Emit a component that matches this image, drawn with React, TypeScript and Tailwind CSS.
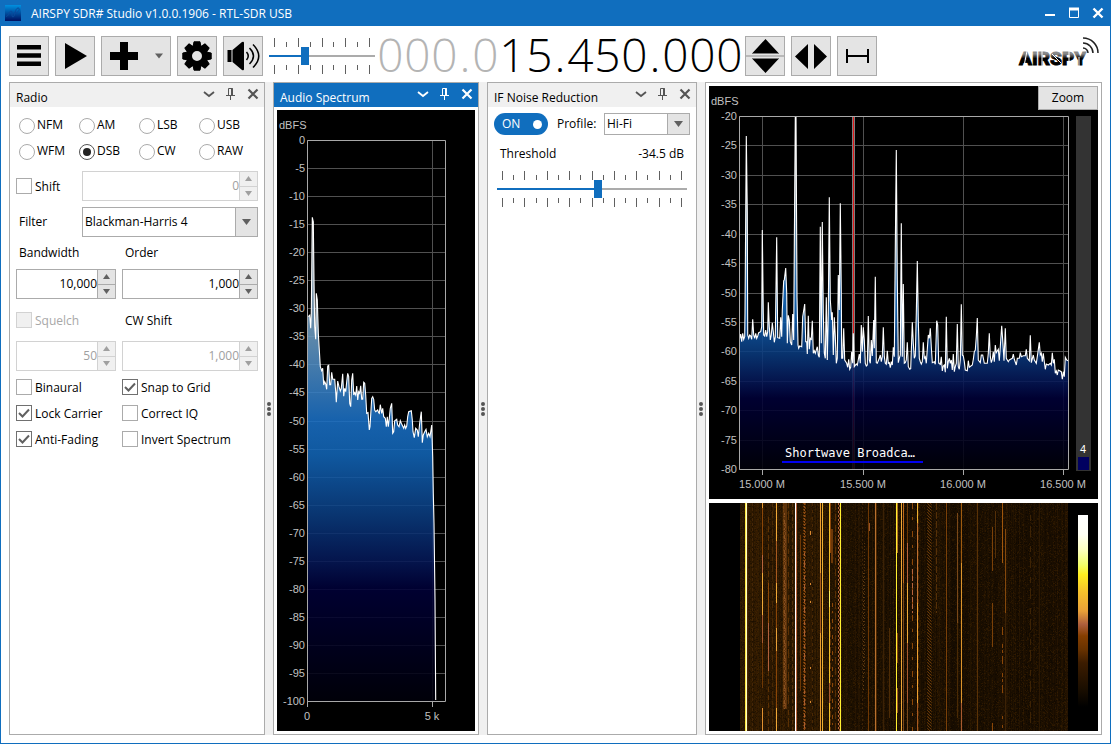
import { useId, useState } from 'react';
import type { CSSProperties, ReactNode } from 'react';

type Point = [number, number];

// trace samples in thirds of a pixel, relative to each chart's origin after the shift
const rfTrace =
  '119,775 122,762 125,785 128,760 131,778 134,770 135,700 139,168 142,400 143,765 146,775 149,765 152,768 155,778 158,718 161,765 164,775 167,760 170,775 173,768 176,758 182,755 185,740 187,450 190,700 191,765 194,768 197,750 200,770 203,755 205,667 208,740 211,780 214,765 217,728 220,755 223,787 226,770 230,472 233,773 239,775 242,712 245,770 247,690 251,602 253,600 257,564 260,640 262,790 265,706 268,720 271,785 275,795 278,702 281,780 283,500 286,110 288,110 291,650 294,795 296,805 299,798 305,800 308,710 314,672 317,785 320,785 322,822 325,707 328,808 331,775 334,778 337,722 340,820 343,812 346,820 352,800 355,825 358,832 361,440 364,790 367,426 370,700 373,820 376,835 379,652 382,840 385,700 388,352 391,660 395,720 397,697 400,825 403,712 406,770 409,850 412,835 415,585 418,690 421,370 424,640 425,835 428,835 431,745 434,840 440,850 443,862 446,838 449,868 452,862 455,815 458,850 460,760 463,860 469,852 472,856 478,822 481,850 484,735 487,815 490,742 493,780 496,850 499,858 502,855 505,708 508,840 511,850 514,780 517,828 521,720 523,805 526,590 529,848 532,850 538,835 541,825 544,845 547,830 550,742 553,830 556,850 559,853 562,812 565,850 568,848 571,863 574,845 577,855 580,802 583,830 586,500 589,210 592,600 595,848 598,835 601,825 604,430 607,830 610,612 613,850 616,848 619,840 622,787 625,860 629,868 632,866 635,780 637,727 640,790 643,835 646,828 649,700 652,543 655,720 658,835 661,845 664,852 667,845 670,787 673,835 676,830 679,850 682,808 685,765 688,775 691,745 694,800 697,848 703,845 706,853 710,722 713,735 716,850 719,850 721,855 724,830 727,873 730,858 733,855 736,877 739,710 742,865 745,845 748,835 751,850 754,840 757,870 760,822 763,875 766,860 769,850 772,732 775,860 778,868 781,840 784,673 787,825 790,828 793,845 796,870 802,872 805,842 808,862 817,855 820,838 823,815 826,810 829,770 832,714 835,840 841,848 844,825 848,825 853,850 862,850 865,820 868,760 871,830 874,848 877,838 880,815 883,845 886,795 889,818 895,808 898,842 901,800 905,737 908,780 912,842 916,745 919,835 925,845 928,840 937,835 940,822 943,838 949,855 952,835 958,835 961,818 964,830 970,827 976,827 979,808 982,835 988,842 991,766 994,848 1000,825 1003,840 1009,850 1012,830 1018,787 1021,825 1024,820 1027,845 1030,820 1033,845 1036,868 1039,852 1045,855 1051,850 1054,855 1057,818 1060,850 1063,838 1066,880 1069,873 1072,885 1075,870 1084,875 1087,898 1090,875 1093,890 1096,832 1100,840 1104,842';

const audioTrace =
  '115,710 119,706 122,745 124,700 126,500 127,412 130,425 132,600 134,740 137,778 139,640 142,660 145,760 148,810 151,860 155,872 158,865 161,915 164,905 167,912 170,928 173,858 176,856 179,914 182,914 185,877 188,898 194,898 197,935 199,967 203,903 207,920 211,933 214,925 218,881 221,949 224,925 227,935 230,905 233,880 236,890 239,970 242,980 245,900 248,880 251,945 254,938 257,945 260,918 263,960 266,935 269,940 272,917 275,958 278,958 281,907 284,910 287,945 290,1000 294,998 298,1050 300,1040 305,955 308,950 311,958 314,990 317,995 323,990 326,998 328,1000 331,974 335,1000 338,985 341,1010 346,1015 349,1040 352,1010 355,1040 358,1015 361,985 365,970 368,1060 371,1055 374,1022 380,1018 383,1035 387,1040 391,1022 394,1030 401,1045 404,1035 407,1045 410,1038 413,1010 416,995 424,992 427,1020 429,1055 433,1073 437,1045 442,1050 445,1070 449,1030 454,995 457,1088 460,1065 464,1055 468,1048 472,1070 476,1060 480,1070 485,1035 488,1130 490,1240 492,1330 495,1560 497,1860';

function readTrace(source: string, shiftX: number, shiftY: number): Point[] {
  return source.split(' ').map((pair) => {
    const [x, y] = pair.split(',').map(Number);
    return [(x - shiftX) / 3, (y - shiftY) / 3];
  });
}

function toPath(points: Point[]) {
  return points.map(([x, y], i) => `${i ? 'L' : 'M'}${x.toFixed(1)} ${y.toFixed(1)}`).join('');
}

const rfPath = toPath(readTrace(rfTrace, 27, 18));
const audioPath = toPath(readTrace(audioTrace, 21, 90));

const axisText = 'fill-[#c0c0c0] font-["Liberation_Sans",sans-serif] text-[11px]';

function FillGradient({ id, top, bottom }: { id: string; top: number; bottom: number }) {
  return (
    <linearGradient id={id} gradientUnits="userSpaceOnUse" x1="0" x2="0" y1={top} y2={bottom}>
      <stop offset="0" stopColor="#f0f2f5" />
      <stop offset=".2" stopColor="#a9b6c0" />
      <stop offset=".35" stopColor="#6b9cc4" />
      <stop offset=".5" stopColor="#1a70c6" />
      <stop offset=".56" stopColor="#1266b8" />
      <stop offset=".67" stopColor="#0a3c80" />
      <stop offset=".75" stopColor="#051858" />
      <stop offset=".8" stopColor="#000038" />
      <stop offset="1" stopColor="#00000a" />
    </linearGradient>
  );
}

function AudioChart() {
  const id = useId();
  const levels = Array.from({ length: 21 }, (_, i) => i);
  return (
    <svg viewBox="0 0 198 621" className="block h-full w-full" role="img" aria-label="Audio Spectrum">
      <defs><FillGradient id={id} top={30} bottom={591} /></defs>
      <text x="2" y="19" className={axisText}>dBFS</text>
      {levels.map((i) => {
        const y = Math.round(30 + i * 28.05);
        return (
          <g key={i}>
            <path d={`M30 ${y + 0.5}H168`} stroke="#505050" />
            <text x="28" y={y + 4} textAnchor="end" className={axisText}>{i === 0 ? '0' : -5 * i}</text>
          </g>
        );
      })}
      <path d="M155.5 30V591" stroke="#505050" />
      <path d={`${audioPath}V591H31V207Z`} fill={`url(#${id})`} fillOpacity=".87" />
      <path d={audioPath} fill="none" stroke="#fff" strokeWidth="1.1" />
      <path d="M30.5 30.5H168.5V591.5H30.5ZM30.5 591v6M155.5 591v6" fill="none" stroke="#a8a8a8" />
      <text x="30" y="610" textAnchor="middle" className={axisText}>0</text>
      <text x="155" y="610" textAnchor="middle" className={axisText}>5 k</text>
    </svg>
  );
}

const rfTicks: [number, string][] = [
  [53, '15.000 M'],
  [154, '15.500 M'],
  [254, '16.000 M'],
  [354, '16.500 M'],
];

function RfChart() {
  const id = useId();
  const levels = Array.from({ length: 13 }, (_, i) => i);
  return (
    <svg viewBox="0 0 389 413" className="block h-full w-full" role="img" aria-label="RF Spectrum">
      <defs><FillGradient id={id} top={30} bottom={383} /></defs>
      <text x="2" y="19" className={axisText}>dBFS</text>
      {levels.map((i) => {
        const y = Math.round(30 + i * 29.42);
        return (
          <g key={i}>
            <path d={`M30 ${y + 0.5}H359`} stroke="#505050" />
            <text x="28" y={y + 4} textAnchor="end" className={axisText}>{-20 - 5 * i}</text>
          </g>
        );
      })}
      {rfTicks.map(([x, label]) => (
        <g key={label}>
          <path d={`M${x + 0.5} 30V383`} stroke="#505050" />
          <text x={x} y="402" textAnchor="middle" className={axisText}>{label}</text>
        </g>
      ))}
      <path d="M144.5 30V383" stroke="#7d7d7d" strokeWidth="3" />
      <path d="M144.5 30V383" stroke="#e01818" />
      <path d={`${rfPath}V383H31Z`} fill={`url(#${id})`} fillOpacity=".87" />
      <path d={rfPath} fill="none" stroke="#fff" strokeWidth="1.1" />
      <path d="M30.5 30.5H359.5V383.5H30.5Z" fill="none" stroke="#a8a8a8" />
      <path d="M53.5 383v6M154.5 383v6M254.5 383v6M354.5 383v6" stroke="#a8a8a8" />
      <text x="76" y="371" className="fill-white font-['DejaVu_Sans_Mono',monospace] text-[12px]">Shortwave Broadca…</text>
      <path d="M73 376H214" stroke="#0000f0" strokeWidth="2" />
      <rect x="367" y="30" width="15" height="355" fill="#333" />
      <rect x="369" y="371" width="11" height="13" fill="#000060" />
      <text x="374" y="367" textAnchor="middle" className="fill-white font-['Liberation_Sans',sans-serif] text-[11px]">4</text>
    </svg>
  );
}

type Streak = [x: number, width: number, from: number, to: number, color: string, dash?: string];

const streaks: Streak[] = [
  [36, 1, 0, 228, '#ffe640'], [37, 1, 0, 228, '#ffffc0'], [38, 1, 0, 228, '#4a2600'],
  [43, 1, 0, 228, '#452606', '3 2'],
  [53, 1, 0, 5, '#e89a30'], [53, 1, 5, 52, '#8a4608'], [53, 1, 52, 70, '#b8643c'], [53, 1, 70, 112, '#efa838'], [53, 1, 112, 140, '#a85a30'], [53, 1, 140, 185, '#6e3804'], [53, 1, 205, 228, '#e09030'],
  [59, 1, 14, 80, '#5a3004', '6 3'], [59, 1, 80, 120, '#8a4608'], [59, 1, 120, 168, '#b0603c'], [59, 1, 168, 228, '#5a3004', '5 3'],
  [63, 1, 0, 228, '#4a2804', '4 4 7 3'],
  [67, 1, 0, 38, '#efa838'], [67, 1, 38, 80, '#a85a20'], [67, 1, 80, 100, '#efa838'], [67, 1, 100, 125, '#8a4608'], [67, 1, 125, 148, '#e8a038'], [67, 1, 148, 205, '#8a4608'], [67, 1, 205, 228, '#efa838'],
  [74, 4, 0, 206, '#5c320a'], [74, 1, 0, 206, '#70400f', '1 2 3 1 2 4'], [75, 1, 10, 206, '#8a5020', '2 1 1 3 4 1 1 2'], [76, 1, 20, 206, '#7c4518', '5 2 1 1 3 3'],
  [79, 1, 0, 228, '#5a3004', '5 3 9 6'], [83, 1, 0, 228, '#55300a', '4 3'],
  [86, 1, 0, 228, '#ffffff'], [87, 1, 0, 228, '#b8643c'],
  [91, 1, 32, 188, '#6e3804'],
  [94, 1, 0, 228, '#7a4008', '1 2'], [95, 1, 0, 228, '#8f4a14', '2 1'], [95, 1, 50, 228, '#aa5c30', '3 5 6 9'], [96, 1, 0, 228, '#6a3806', '2 2'],
  [101, 1, 28, 32, '#d88830'], [101, 1, 80, 82, '#d88830'], [101, 1, 98, 100, '#d88830'], [101, 1, 164, 166, '#d88830'], [101, 1, 198, 200, '#d88830'], [103, 1, 0, 228, '#4a2804', '3 4'],
  [111, 1, 0, 228, '#eb9c30'], [113, 1, 0, 228, '#efb030'], [111, 1, 70, 130, '#aa5c20'],
  [120, 1, 0, 228, '#f3c028'], [120, 1, 88, 104, '#fff060'], [120, 1, 180, 200, '#a85a30'],
  [121, 1, 0, 50, '#8a4608'], [122, 2, 26, 60, '#6e3808'], [121, 1, 120, 228, '#5a3004', '6 2'], [123, 1, 100, 228, '#8a4608', '4 4 2 6'],
  [126, 1, 0, 228, '#5a3004', '7 4'],
  [129, 1, 0, 228, '#b8643c', '2 2'], [130, 1, 2, 228, '#9a5428', '2 2'], [131, 1, 0, 228, '#fff030'],
  [153, 1, 0, 228, '#3c2206', '2 2'], [154, 1, 70, 190, '#6a4214', '1 3'], [155, 1, 40, 170, '#55320c', '1 2'],
  [159, 1, 0, 228, '#6e3804'], [160, 1, 20, 28, '#9a5428'], [166, 1, 0, 228, '#b87030'], [167, 1, 0, 228, '#4a2600'],
  [174, 1, 0, 228, '#3c2206'], [180, 1, 125, 215, '#4e2c06'],
  [187, 1, 0, 228, '#fff030'], [188, 1, 0, 50, '#b87820'], [188, 1, 130, 160, '#8a4608'], [188, 1, 185, 210, '#a05820'],
  [192, 1, 0, 228, '#efa838'], [194, 1, 0, 228, '#7a481c'], [194, 1, 0, 80, '#c06c1c'],
  [198, 1, 0, 40, '#6e3804'], [198, 1, 40, 80, '#b8643c'], [198, 1, 80, 140, '#efa838'], [198, 1, 140, 200, '#a85a30'], [198, 1, 200, 228, '#7a481c'],
  [203, 1, 0, 228, '#8a4608', '6 8 3 11'], [203, 1, 66, 110, '#b8643c', '5 2'],
  [208, 1, 0, 20, '#efb030'], [208, 1, 20, 100, '#c07030'], [208, 1, 100, 200, '#efa030'], [208, 1, 200, 228, '#a85a20'], [209, 1, 0, 228, '#4a2600', '5 3'],
  [218, 1, 0, 228, '#5a3004', '1 2'], [219, 1, 1, 228, '#6a3a08', '1 2'], [220, 1, 2, 228, '#5f3408', '1 2'], [221, 1, 0, 228, '#6a3a08', '1 2'], [222, 1, 1, 228, '#4a2a04', '1 2'],
  [227, 1, 0, 110, '#553008', '7 2'], [237, 1, 0, 228, '#7a4008'], [248, 1, 10, 120, '#7a4818'], [248, 1, 120, 215, '#4a2a04'],
  [252, 1, 0, 60, '#a05c10'], [252, 1, 60, 200, '#dc942c'], [252, 1, 200, 228, '#a85a30'],
  [268, 1, 0, 228, '#5a3206'], [283, 1, 24, 68, '#7a4008'], [283, 1, 100, 144, '#7a4008'], [283, 1, 220, 228, '#8a4608'],
  [286, 1, 8, 55, '#553008'], [293, 1, 0, 60, '#a0560c'], [293, 1, 124, 195, '#8a4608', '8 9 4 2 3 3'], [293, 1, 213, 228, '#8a4608', '3 6'],
  [296, 1, 26, 110, '#85480c'], [296, 1, 110, 228, '#3c2206'], [321, 1, 12, 228, '#3e2304', '6 5 11 9'], [330, 1, 0, 228, '#2c1802'],
];

function seeded(seed: number) {
  let value = seed;
  return () => {
    value = (value * 1664525 + 1013904223) % 4294967296;
    return value / 4294967296;
  };
}

function speckle(count: number, seed: number) {
  const next = seeded(seed);
  let path = '';
  for (let i = 0; i < count; i++) {
    path += `M${31 + Math.floor(next() * 328)} ${Math.floor(next() * 228)}h1v1h-1z`;
  }
  return path;
}

const darkSpeckle = speckle(14000, 7);
const lightSpeckle = speckle(11000, 41);
const columnNoise = (() => {
  const next = seeded(99);
  return Array.from({ length: 328 }, () => next());
})();

function Waterfall() {
  const id = useId();
  return (
    <svg viewBox="0 0 389 228" className="block h-full w-full" shapeRendering="crispEdges" role="img" aria-label="Waterfall">
      <defs>
        <linearGradient id={`${id}base`}>
          <stop offset="0" stopColor="#2e1900" />
          <stop offset=".25" stopColor="#2a1700" />
          <stop offset=".36" stopColor="#1d1000" />
          <stop offset="1" stopColor="#1c0f00" />
        </linearGradient>
        <linearGradient id={`${id}scale`} x2="0" y2="1">
          <stop offset="0" stopColor="#fff" />
          <stop offset=".1" stopColor="#fffff4" />
          <stop offset=".18" stopColor="#fdffc0" />
          <stop offset=".26" stopColor="#f2ff68" />
          <stop offset=".31" stopColor="#ffef20" />
          <stop offset=".4" stopColor="#f6c22c" />
          <stop offset=".5" stopColor="#e8a038" />
          <stop offset=".57" stopColor="#ae5e3c" />
          <stop offset=".63" stopColor="#843e00" />
          <stop offset=".7" stopColor="#683200" />
          <stop offset=".77" stopColor="#3c1c00" />
          <stop offset=".9" stopColor="#1c0f00" />
          <stop offset="1" stopColor="#000" />
        </linearGradient>
      </defs>
      <rect x="31" width="328" height="228" fill={`url(#${id}base)`} />
      {columnNoise.map((level, i) => (
        <rect key={i} x={31 + i} width="1" height="228" fill={level > 0.5 ? '#5a3204' : '#000'} fillOpacity={Math.abs(level - 0.5) * 0.35} />
      ))}
      <path d={darkSpeckle} fill="#000" fillOpacity=".28" />
      <path d={lightSpeckle} fill="#6a3a00" fillOpacity=".22" />
      {streaks.map(([x, width, from, to, color, dash], i) => (
        <path key={i} d={`M${x + width / 2} ${from}V${to}`} stroke={color} strokeWidth={width} strokeDasharray={dash} />
      ))}
      <rect x="369" y="12" width="10" height="192" fill={`url(#${id}scale)`} />
    </svg>
  );
}

function ToolButton({ label, wide = false, children }: { label: string; wide?: boolean; children: ReactNode }) {
  return (
    <button
      type="button"
      aria-label={label}
      className={`h-10 shrink-0 border border-[#ababab] bg-[#e4e4e4] hover:bg-[#d4d4d4] ${wide ? 'w-[70px]' : 'w-10'}`}
    >
      <svg viewBox={wide ? '1 1 68 38' : '1 1 38 38'} className="block h-full w-full">{children}</svg>
    </button>
  );
}

function Ticks({ count, below = false }: { count: number; below?: boolean }) {
  return (
    <div className={`flex h-[10px] justify-between px-[5px] ${below ? 'items-start' : 'items-end'}`}>
      {Array.from({ length: count }, (_, i) => (
        <span key={i} className={`w-px bg-[#606060] ${i % 2 ? 'h-[5px]' : 'h-[9px]'}`} />
      ))}
    </div>
  );
}

function Slider({ label, initial, ticks }: { label: string; initial: number; ticks: number }) {
  const [value, setValue] = useState(initial);
  return (
    <div>
      <Ticks count={ticks} />
      <input
        type="range"
        aria-label={label}
        min={0}
        max={1000}
        value={value}
        onChange={(event) => setValue(Number(event.target.value))}
        style={{ '--fill': `${value / 10}%` } as CSSProperties}
        className="block h-[18px] w-full appearance-none bg-transparent [&::-webkit-slider-runnable-track]:h-[2px] [&::-webkit-slider-runnable-track]:bg-[linear-gradient(to_right,#106ebe_var(--fill),#ababab_var(--fill))] [&::-webkit-slider-thumb]:mt-[-8px] [&::-webkit-slider-thumb]:h-[18px] [&::-webkit-slider-thumb]:w-2 [&::-webkit-slider-thumb]:appearance-none [&::-webkit-slider-thumb]:bg-[#106ebe]"
      />
      <Ticks count={ticks} below />
    </div>
  );
}

function PanelHeader({ title, active = false }: { title: string; active?: boolean }) {
  return (
    <header className={`flex h-6 shrink-0 items-start justify-between pr-[5px] pl-1.5 ${active ? 'bg-[#106ebe] text-white' : 'bg-[#f0f0f0] text-black'}`}>
      <h2 className="pt-[7px] leading-4">{title}</h2>
      <div className={`flex gap-2.5 pt-[5px] ${active ? 'text-white' : 'text-[#555]'}`}>
        <button type="button" aria-label="Panel menu">
          <svg viewBox="0 0 12 14" className="block h-[14px] w-3" fill="none" stroke="currentColor" strokeWidth="1.8"><path d="M1 4l5 4 5-4" /></svg>
        </button>
        <button type="button" aria-label="Auto hide">
          <svg viewBox="0 0 12 14" className="block h-[14px] w-3" fill="none" stroke="currentColor"><path d="M3.5 7V.5h4V7M7.5 .5V7M6.500 .5V7M1 7.500h9M5.500 8v4" /></svg>
        </button>
        <button type="button" aria-label="Close panel">
          <svg viewBox="0 0 12 14" className="block h-[14px] w-3" fill="none" stroke="currentColor" strokeWidth="2.2"><path d="M1.500 1.500l9 9M10.500 1.500l-9 9" /></svg>
        </button>
      </div>
    </header>
  );
}

function Splitter() {
  return (
    <div className="flex w-2 shrink-0 flex-col items-center justify-center gap-px bg-[#f0f0f0]" role="separator">
      <span className="size-1 rounded-full bg-[#555]" />
      <span className="size-1 rounded-full bg-[#555]" />
      <span className="size-1 rounded-full bg-[#555]" />
    </div>
  );
}

function Spinner({ label, value, disabled = false }: { label: string; value: string; disabled?: boolean }) {
  const line = disabled ? 'border-[#d2d2d2]' : 'border-[#ababab]';
  const arrow = disabled ? 'fill-[#a0a0a0]' : 'fill-[#606060]';
  const face = disabled ? 'bg-[#f0f0f0]' : 'bg-[#e4e4e4]';
  return (
    <div className={`flex h-[30px] min-w-0 flex-1 border bg-white ${line}`}>
      <input
        aria-label={label}
        defaultValue={value}
        disabled={disabled}
        className="w-0 min-w-0 flex-1 bg-transparent text-right text-black outline-none disabled:text-[#a0a0a0]"
      />
      <div className={`flex w-[18px] flex-col border-l ${line}`}>
        <button type="button" aria-label={`Increase ${label}`} disabled={disabled} className={`flex flex-1 items-center justify-center border-b ${face} ${line}`}>
          <svg viewBox="0 0 7 5" className={`h-[5px] w-[7px] ${arrow}`}><path d="M3.5 0L7 5H0z" /></svg>
        </button>
        <button type="button" aria-label={`Decrease ${label}`} disabled={disabled} className={`flex flex-1 items-center justify-center ${face}`}>
          <svg viewBox="0 0 7 5" className={`h-[5px] w-[7px] ${arrow}`}><path d="M3.5 5L0 0h7z" /></svg>
        </button>
      </div>
    </div>
  );
}

function DropDown({ id, options, small = false }: { id: string; options: string[]; small?: boolean }) {
  return (
    <div className={`relative min-w-0 flex-1 ${small ? 'h-[22px]' : 'h-[30px]'}`}>
      <select id={id} className="h-full w-full appearance-none border border-[#ababab] bg-white pr-6 pl-0.5 text-black outline-none">
        {options.map((option) => <option key={option}>{option}</option>)}
      </select>
      <span className="pointer-events-none absolute inset-y-0 right-0 flex w-[23px] items-center justify-center border border-[#ababab] bg-[#e4e4e4]">
        <svg viewBox="0 0 9 6" className="h-1.5 w-[9px] fill-[#606060]"><path d="M0 0h9L4.5 6z" /></svg>
      </span>
    </div>
  );
}

function CheckBox({ label, checked = false, disabled = false }: { label: string; checked?: boolean; disabled?: boolean }) {
  return (
    <label className={`flex h-[26px] items-center gap-[3px] whitespace-nowrap ${disabled ? 'text-[#a8a8a8]' : ''}`}>
      <span className="grid">
        <input
          type="checkbox"
          defaultChecked={checked}
          disabled={disabled}
          className="peer col-start-1 row-start-1 size-4 appearance-none border border-[#ababab] bg-white checked:border-[#707070] disabled:border-[#d2d2d2] disabled:bg-[#f0f0f0]"
        />
        <svg viewBox="0 0 16 16" className="pointer-events-none invisible col-start-1 row-start-1 size-4 peer-checked:visible" fill="none" stroke="#606060" strokeWidth="2">
          <path d="M3 8l3.5 3.5L13 4.5" />
        </svg>
      </span>
      <span className="pt-0.5">{label}</span>
    </label>
  );
}

const modes = ['NFM', 'AM', 'LSB', 'USB', 'WFM', 'DSB', 'CW', 'RAW'];

function RadioPanel() {
  const [mode, setMode] = useState('DSB');
  return (
    <section className="flex w-64 shrink-0 flex-col border border-[#ababab] bg-white">
      <PanelHeader title="Radio" />
      <div className="px-1.5 pt-1.5">
        <div className="grid grid-cols-[repeat(4,60px)] pl-[3px]" role="radiogroup" aria-label="Mode">
          {modes.map((name) => (
            <label key={name} className="flex h-[26px] items-center gap-0.5">
              <span className="grid place-items-center">
                <input
                  type="radio"
                  name="mode"
                  checked={mode === name}
                  onChange={() => setMode(name)}
                  className="peer col-start-1 row-start-1 size-4 appearance-none rounded-full border border-[#ababab] bg-white checked:border-[#555]"
                />
                <span className="pointer-events-none invisible col-start-1 row-start-1 size-2 rounded-full bg-[#222] peer-checked:visible" />
              </span>
              <span className="pb-0.5">{name}</span>
            </label>
          ))}
        </div>
        <div className="mt-1.5 flex items-center">
          <div className="w-[66px]"><CheckBox label="Shift" /></div>
          <Spinner label="Shift value" value="0" disabled />
        </div>
        <div className="mt-1.5 flex items-center">
          <label htmlFor="filter" className="w-[66px] pl-[3px]">Filter</label>
          <DropDown id="filter" options={['Blackman-Harris 4', 'Blackman-Harris 7', 'Hamming']} />
        </div>
        <div className="grid grid-cols-[100px_1fr] items-center gap-x-1.5">
          <span className="flex h-8 items-center pl-[3px]">Bandwidth</span>
          <span className="flex h-8 items-center pl-[3px]">Order</span>
          <Spinner label="Bandwidth" value="10,000" />
          <Spinner label="Order" value="1,000" />
          <div className="flex h-[42px] items-center"><CheckBox label="Squelch" disabled /></div>
          <span className="flex h-[42px] items-center pt-0.5 pl-[3px]">CW Shift</span>
          <Spinner label="Squelch level" value="50" disabled />
          <Spinner label="CW Shift" value="1,000" disabled />
        </div>
        <div className="mt-[3px] grid grid-cols-[100px_1fr] gap-x-1.5">
          <CheckBox label="Binaural" />
          <CheckBox label="Snap to Grid" checked />
          <CheckBox label="Lock Carrier" checked />
          <CheckBox label="Correct IQ" />
          <CheckBox label="Anti-Fading" checked />
          <CheckBox label="Invert Spectrum" />
        </div>
      </div>
    </section>
  );
}

function NoisePanel() {
  const [on, setOn] = useState(true);
  return (
    <section className="flex w-[210px] shrink-0 flex-col border border-[#ababab] bg-white">
      <PanelHeader title="IF Noise Reduction" />
      <div className="px-1.5 pt-1.5">
        <div className="flex items-center">
          <button
            type="button"
            role="switch"
            aria-checked={on}
            onClick={() => setOn(!on)}
            className={`flex h-[22px] w-[54px] items-center justify-between rounded-full pr-1.5 pl-2 text-white ${on ? 'bg-[#106ebe]' : 'flex-row-reverse bg-[#ababab]'}`}
          >
            {on ? 'ON' : 'OFF'}
            <span className="size-[9px] rounded-full bg-white" />
          </button>
          <label htmlFor="profile" className="w-14 pl-[9px]">Profile:</label>
          <DropDown id="profile" options={['Hi-Fi', 'Narrow', 'DX']} small />
        </div>
        <div className="mt-[11px] flex items-center justify-between px-1.5 leading-4">
          <span>Threshold</span>
          <span>-34.5 dB</span>
        </div>
        <div className="mt-2 px-[3px]"><Slider label="Threshold" initial={533} ticks={17} /></div>
      </div>
    </section>
  );
}

function Triangles({ d }: { d: string }) {
  return <path d={d} fill="#000" />;
}

function FrequencyDisplay() {
  const digits = '000.015.450.000'.split('');
  return (
    <div className="ml-0.5 flex h-10 shrink-0 items-center pb-1 font-['Open_Sans',sans-serif] text-[46px] leading-9 font-[350]" aria-label="Frequency">
      {digits.map((digit, i) => (
        <span key={i} className={`text-center ${digit === '.' ? 'w-[14px]' : 'w-[27px]'} ${i < 5 ? 'text-[#b4b4b4]' : 'text-black'}`}>{digit}</span>
      ))}
    </div>
  );
}

function Logo() {
  return (
    <svg viewBox="0 0 83 38" className="ml-auto h-[38px] w-[83px] shrink-0 overflow-visible" role="img" aria-label="Airspy">
      <defs>
        <linearGradient id="logo-ink" x2="0" y2="1">
          <stop offset=".3" stopColor="#888" />
          <stop offset=".5" stopColor="#000" />
        </linearGradient>
      </defs>
      <text x="0" y="28" fill="url(#logo-ink)" stroke="url(#logo-ink)" strokeWidth=".8" className="font-['Roboto',sans-serif] text-[19px] font-black">AIRSPY</text>
      <path d="M8 14l-3 15M23 14v15M33 17l9 9M50 14v15M60 29v-9" stroke="#fff" strokeWidth="1" fill="none" />
      <g fill="none" stroke="#222" strokeWidth="1.500">
        <path d="M64 11a5 5 0 0 1 5 5" />
        <path d="M64 6a10 10 0 0 1 10 10" />
        <path d="M64 1a15 15 0 0 1 15 15" />
      </g>
    </svg>
  );
}

function Toolbar() {
  return (
    <div className="flex h-14 shrink-0 items-center px-2 pt-1">
      <div className="flex shrink-0 gap-1.5">
        <ToolButton label="Menu"><path d="M8 9h24v4.500H8zM8 17.300h24v4.400H8zM8 25.500h24v4.500H8z" /></ToolButton>
        <ToolButton label="Start"><Triangles d="M10 7l22 13-22 13z" /></ToolButton>
        <ToolButton label="New slice" wide>
          <path d="M19 6h8v10h10v8H27v10h-8V24H9v-8h10z" />
          <path d="M54 17.500h8l-4 5z" fill="#606060" />
        </ToolButton>
        <ToolButton label="Settings">
          <circle cx="20" cy="20" r="8" fill="none" stroke="#000" strokeWidth="6" />
          {[0, 45, 90, 135, 180, 225, 270, 315].map((angle) => (
            <path key={angle} d="M16 11l1-5.200h6L24 11z" stroke="#000" strokeWidth="1" strokeLinejoin="round" transform={`rotate(${angle} 20 20)`} />
          ))}
        </ToolButton>
        <ToolButton label="Mute">
          <path d="M4.500 14H8.500v12H4.500zM9.500 14L19 6q2-1 2 1v26q0 2-2 1l-9.500-8z" />
          <g fill="none" stroke="#000" strokeWidth="1.500">
            <path d="M23.500 16q3.500 4 0 8" />
            <path d="M26.500 12q8 8 0 16" />
            <path d="M30 8.500q11.500 11.500 0 23" />
          </g>
        </ToolButton>
        <div className="w-[106px] self-center"><Slider label="Volume" initial={327} ticks={9} /></div>
      </div>
      <FrequencyDisplay />
      <div className="ml-0.5 flex shrink-0 gap-1.5">
        <ToolButton label="Step up or down">
          <path d="M7 17.500h27M7 22.500h27" stroke="#777" />
          <path d="M1 20h38" stroke="#ababab" strokeWidth="1.500" />
          <Triangles d="M20.500 3L33.500 17h-26zM7.500 23h26l-13 14z" />
        </ToolButton>
        <ToolButton label="Snap frequency"><Triangles d="M17 8v25L4 20.500zM23 8l13 12.500L23 33z" /></ToolButton>
        <ToolButton label="Center bandwidth">
          <path d="M10 13v14M31 13v14M10 20h21" fill="none" stroke="#000" strokeWidth="2" />
        </ToolButton>
      </div>
      <Logo />
    </div>
  );
}

function TitleBar() {
  return (
    <header className="flex h-[26px] shrink-0 items-center bg-[#106ebe] pr-[6px] pl-1 text-white">
      <svg viewBox="0 0 16 16" className="size-4">
        <defs>
          <linearGradient id="app-icon" x2="0" y2="1"><stop stopColor="#0090e0" /><stop offset="1" stopColor="#001060" /></linearGradient>
        </defs>
        <rect width="16" height="16" fill="url(#app-icon)" />
        <path d="M1 11c2 2 3-5 5-5s0 6 2 6 2-9 5-9 0 6-4 5" fill="none" stroke="#0b4a9c" />
      </svg>
      <h1 className="ml-2.5 pt-px">AIRSPY SDR# Studio v1.0.0.1906 - RTL-SDR USB</h1>
      <div className="ml-auto flex gap-3">
        <button type="button" aria-label="Minimize">
          <svg viewBox="0 0 12 12" className="size-3" stroke="#fff" strokeWidth="2"><path d="M1 8h10" /></svg>
        </button>
        <button type="button" aria-label="Maximize">
          <svg viewBox="0 0 12 12" className="size-3" fill="none" stroke="#fff"><path d="M1.500 1.500h9v9h-9z" /><path d="M1 2h10" strokeWidth="3" /></svg>
        </button>
        <button type="button" aria-label="Close">
          <svg viewBox="0 0 12 12" className="size-3" stroke="#fff" strokeWidth="2.400"><path d="M1.500 1.500l9 9M10.500 1.500l-9 9" /></svg>
        </button>
      </div>
    </header>
  );
}

export default function App() {
  return (
    <div className="flex h-screen flex-col border border-t-0 border-[#106ebe] bg-white font-['Open_Sans','Noto_Sans',sans-serif] text-[12px] leading-4 text-black">
      <TitleBar />
      <Toolbar />
      <main className="mx-2 mb-2 flex min-h-0 flex-1">
        <RadioPanel />
        <Splitter />
        <section className="flex w-[206px] shrink-0 flex-col border border-[#ababab] bg-white">
          <PanelHeader title="Audio Spectrum" active />
          <div className="m-[3px] min-h-0 flex-1 bg-black"><AudioChart /></div>
        </section>
        <Splitter />
        <NoisePanel />
        <Splitter />
        <section className="flex min-w-0 flex-1 flex-col gap-1 border border-[#ababab] bg-white p-[3px]">
          <div className="relative min-h-0 grow-[413] basis-0 bg-black">
            <RfChart />
            <button type="button" className="absolute top-0 right-0 h-6 w-[60px] border border-[#ababab] bg-[#e4e4e4]">Zoom</button>
          </div>
          <div className="min-h-0 grow-[228] basis-0 bg-black"><Waterfall /></div>
        </section>
      </main>
    </div>
  );
}
